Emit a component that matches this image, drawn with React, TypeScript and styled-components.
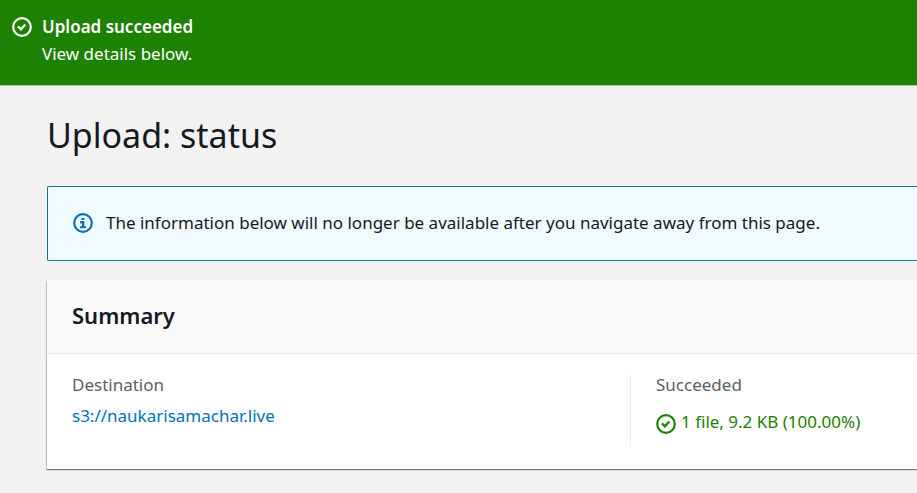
import React from "react";
import styled, { createGlobalStyle } from "styled-components";

const GlobalStyle = createGlobalStyle`
  *, *::before, *::after { box-sizing: border-box; }
  body {
    margin: 0;
    background: #f2f2f2;
    color: #16191f;
    font-family: "Noto Sans", "Open Sans", sans-serif;
    font-size: 17px;
    line-height: 27px;
    overflow-x: hidden;
  }
`;

const Flashbar = styled.div`
  display: flex;
  gap: 10px;
  padding: 13px 12px 18px;
  background: #1d8102;
  color: #fff;
  border-bottom: 1px solid #a5c49e;
`;

const FlashTitle = styled.div`
  font-weight: 600;
`;

const Icon = styled.svg`
  flex: none;
  width: 20px;
  height: 20px;
  margin-top: 4px;
  fill: none;
  stroke: currentColor;
  stroke-width: 2.2;
`;

const Main = styled.main`
  padding: 25px 0 24px 47px;
`;

const Title = styled.h1`
  margin: 0 0 27px;
  font-size: 34px;
  line-height: 48px;
  font-weight: 400;
`;

const Alert = styled.div`
  display: flex;
  gap: 13px;
  padding: 22px 25px 24px;
  margin-bottom: 19px;
  background: #f1faff;
  border: 1px solid #0e7596;
  border-right: 0;
  border-radius: 2px 0 0 2px;
`;

const InfoIcon = styled(Icon)`
  color: #0073bb;
`;

const Card = styled.section`
  background: #fff;
  box-shadow: 0 1px 1px rgba(30, 30, 30, 0.5), -1px 1px 1px rgba(30, 30, 30, 0.15);
`;

const CardHeader = styled.header`
  padding: 19px 25px 22px;
  background: #fafafa;
  border-bottom: 1px solid #eaeded;
`;

const CardTitle = styled.h2`
  margin: 0;
  font-size: 22px;
  line-height: 32px;
  font-weight: 600;
`;

const Columns = styled.dl`
  display: grid;
  grid-template-columns: 2fr 1fr;
  margin: 0;
  padding: 21px 8px 23px 25px;
`;

const Column = styled.div<{ $divided?: boolean }>`
  min-height: 71px;
  padding-left: ${(p) => (p.$divided ? "25px" : "0")};
  border-left: ${(p) => (p.$divided ? "1px solid #eaeded" : "0")};
`;

const Label = styled.dt`
  color: #5a5f66;
  line-height: 20px;
`;

const Value = styled.dd`
  margin: 7px 0 0;
`;

const Link = styled.a`
  color: #0073bb;
  text-decoration: none;
`;

const Status = styled.span`
  display: flex;
  gap: 5px;
  padding-top: 6px;
  color: #1d8102;
  white-space: nowrap;
`;

const StatusIcon = styled(Icon)`
  margin-top: 6px;
`;

const checkShape = (
  <>
    <circle cx="10" cy="10" r="8.8" />
    <path d="M5.9 9.4l3 2.9 4.4-4.9" />
  </>
);

export default function App() {
  return (
    <>
      <GlobalStyle />
      <Flashbar role="status">
        <Icon viewBox="0 0 20 20" aria-hidden="true">{checkShape}</Icon>
        <div>
          <FlashTitle>Upload succeeded</FlashTitle>
          <div>View details below.</div>
        </div>
      </Flashbar>
      <Main>
        <Title>Upload: status</Title>
        <Alert>
          <InfoIcon viewBox="0 0 20 20" aria-hidden="true">
            <circle cx="10" cy="10" r="8.8" />
            <path d="M8.6 6h2.8" strokeWidth="2" />
            <path d="M7.2 9.3h2.9v4.6" strokeWidth="2.4" />
            <path d="M7 14.2h6" strokeWidth="2" />
          </InfoIcon>
          <div>The information below will no longer be available after you navigate away from this page.</div>
        </Alert>
        <Card>
          <CardHeader>
            <CardTitle>Summary</CardTitle>
          </CardHeader>
          <Columns>
            <Column>
              <Label>Destination</Label>
              <Value><Link href="#destination">s3://naukarisamachar.live</Link></Value>
            </Column>
            <Column $divided>
              <Label>Succeeded</Label>
              <Value>
                <Status>
                  <StatusIcon viewBox="0 0 20 20" aria-hidden="true">{checkShape}</StatusIcon>
                  1 file, 9.2 KB (100.00%)
                </Status>
              </Value>
            </Column>
          </Columns>
        </Card>
      </Main>
    </>
  );
}
